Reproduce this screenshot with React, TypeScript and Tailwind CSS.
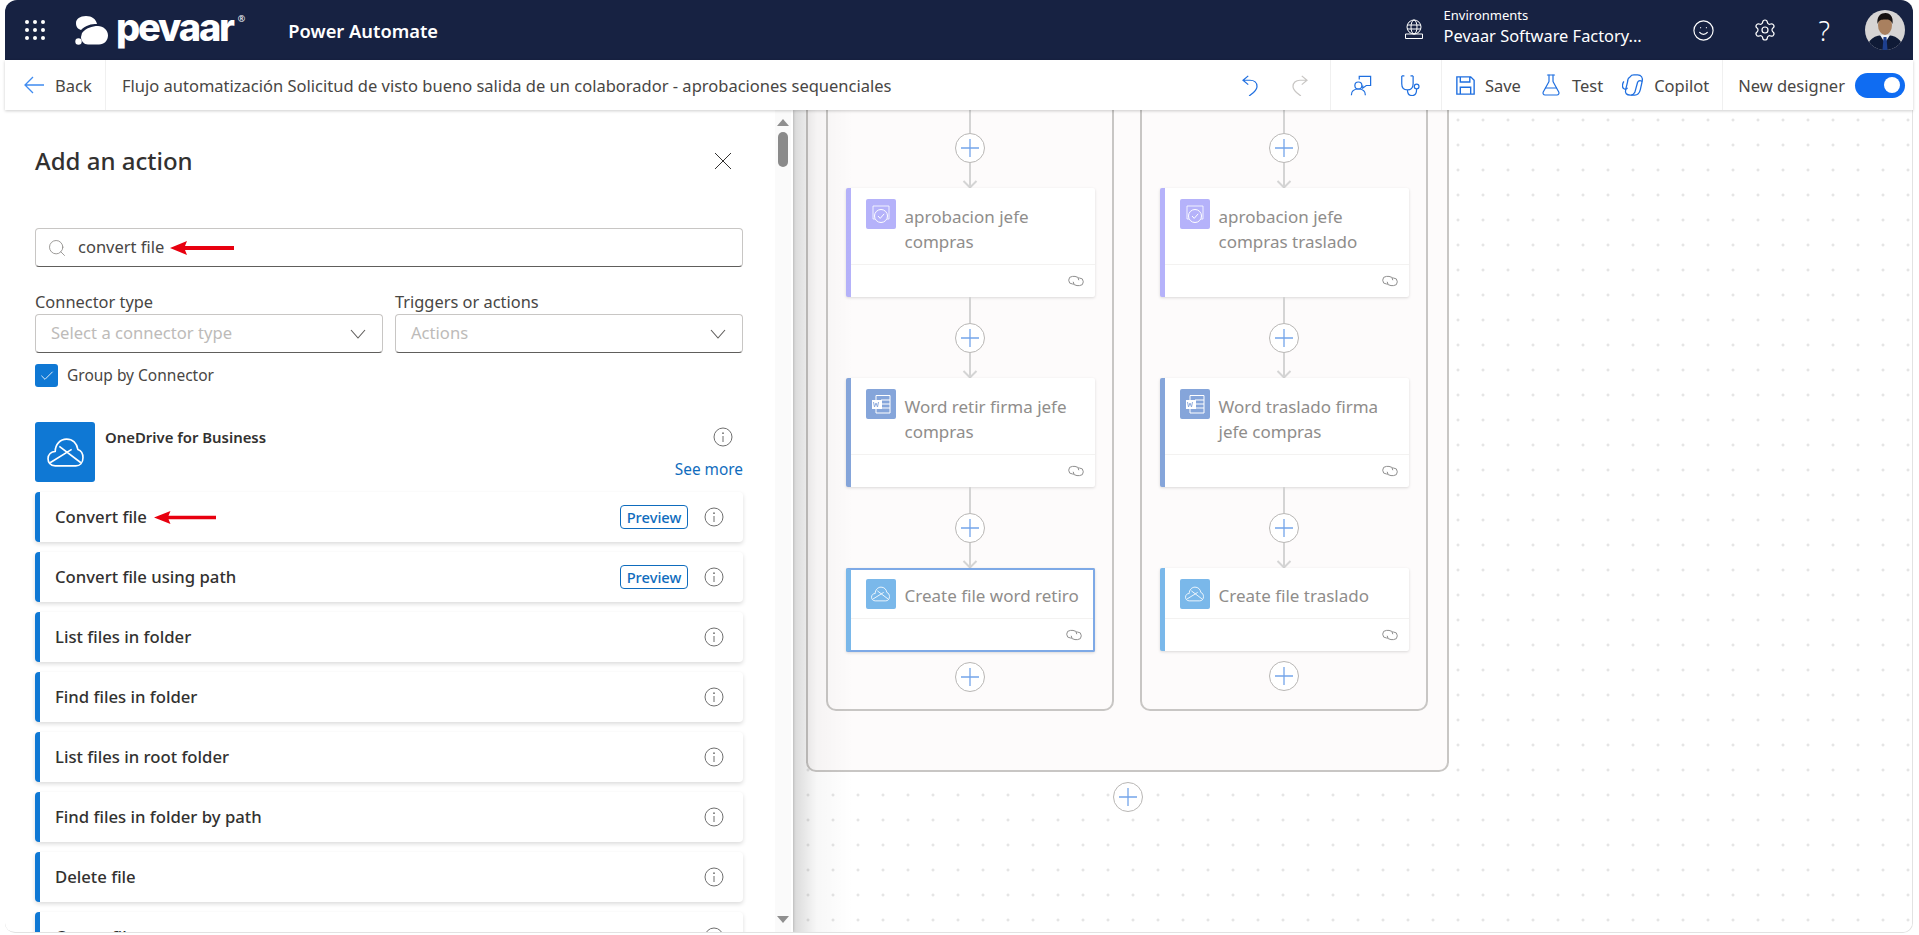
import React from "react";
import { Search, Check, FlaskConical, Smile, Settings } from "lucide-react";

const Info = ({ className = "" }: { className?: string }) => (
  <svg viewBox="0 0 20 20" className={className} fill="none" stroke="#6f6f6f" strokeWidth="1">
    <circle cx="10" cy="10" r="9" />
    <circle cx="10" cy="6.2" r="0.9" fill="#6f6f6f" stroke="none" />
    <path d="M10 9v6" />
  </svg>
);

const Arrow = ({ className = "" }: { className?: string }) => (
  <svg viewBox="0 0 64 14" preserveAspectRatio="none" className={className}>
    <path d="M0 7 L17 0 L15 5 L64 5 L64 9 L15 9 L17 14 Z" fill="#e8000f" />
  </svg>
);

const CloudIcon = ({ className = "" }: { className?: string }) => (
  <svg viewBox="0 0 36 30" className={className} fill="none" stroke="#fff" strokeWidth="1.6" strokeLinejoin="round">
    <path d="M8 28 C3 28 1 24 1 21 C1 17 4 14 8 14 C8 7 13 2 19 2 C25 2 29 6 30 12 C33 13 35 16 35 20 C35 25 32 28 28 28 Z" />
    <path d="M3 25 L24 12 M12 9 L33 25" />
  </svg>
);

const ApprovalIcon = () => (
  <svg viewBox="0 0 30 30" className="w-[30px] h-[30px]" fill="none" stroke="#fff" strokeWidth="1">
    <path d="M9 20 H7 V7 H23 V20 H21" opacity="0.8" />
    <circle cx="15" cy="17" r="6.5" />
    <path d="M12 17 l2.2 2.4 l4-4.6" />
  </svg>
);

const WordIcon = () => (
  <svg viewBox="0 0 30 30" className="w-[30px] h-[30px]" fill="none">
    <path d="M10 6.5 H24 V24 H10 Z" stroke="#fff" strokeWidth="1" />
    <path d="M15 11 H24 M15 15 H24 M15 19 H24" stroke="#fff" strokeWidth="1" />
    <rect x="6" y="11" width="10" height="9" fill="#fff" />
    <path d="M7.5 13 l1 5 l1.5-4 l1.5 4 l1-5" stroke="#84a4d9" strokeWidth="0.9" />
  </svg>
);

const LinkIcon = () => (
  <svg viewBox="0 0 16 14" className="w-[16px] h-[14px]" fill="none" stroke="#8f8f8f" strokeWidth="1">
    <path d="M6 10 H4.5 a3.8 3.8 0 0 1 0-7.6 H7 a3.8 3.8 0 0 1 3.8 3.8" />
    <path d="M10 4 H11.5 a3.8 3.8 0 0 1 0 7.6 H9 a3.8 3.8 0 0 1-3.8-3.8" />
  </svg>
);

const Chevron = () => (
  <svg viewBox="0 0 16 10" className="w-[16px] h-[10px]" fill="none" stroke="#605e5c" strokeWidth="1.1">
    <path d="M1 1 L8 9 L15 1" />
  </svg>
);

const Plus = () => (
  <div className="w-[30px] h-[30px] shrink-0 rounded-full border border-[#b9b7b5] bg-white flex items-center justify-center">
    <svg viewBox="0 0 18 18" className="w-[18px] h-[18px]" stroke="#74a5ea" strokeWidth="1.3">
      <path d="M9 0 V18 M0 9 H18" />
    </svg>
  </div>
);

const Connector = () => (
  <svg viewBox="0 0 16 25" className="w-[16px] h-[25px] shrink-0" fill="none" stroke="#d4d4d4" strokeWidth="2">
    <path d="M8 0 V24 M1.5 18 L8 24.5 L14.5 18" />
  </svg>
);

type CardProps = { lines: string[]; kind: "approval" | "word" | "drive"; selected?: boolean };

const Card = ({ lines, kind, selected }: CardProps) => {
  const bar = kind === "approval" ? "border-l-[#b5b2fa]" : kind === "word" ? "border-l-[#85a5da]" : "border-l-[#7ab8ea]";
  const bg = kind === "approval" ? "bg-[#b5b2fa]" : kind === "word" ? "bg-[#85a5da]" : "bg-[#7ab8ea]";
  const two = lines.length > 1;
  return (
    <div
      className={`w-[249px] shrink-0 bg-white rounded-[2px] border-l-[5px] flex flex-col shadow-[0_1px_3px_rgba(0,0,0,0.14)] ${bar} ${
        selected ? "border-y-2 border-r-2 border-y-[#7ea9e6] border-r-[#7ea9e6]" : ""
      }`}
    >
      <div className={`flex pl-[15px] ${two ? "h-[76px] pt-[11px]" : selected ? "h-[48px] pt-[9px]" : "h-[50px] pt-[11px]"}`}>
        <div className={`w-[30px] h-[30px] rounded-[2px] shrink-0 flex items-center justify-center ${bg}`}>
          {kind === "approval" && <ApprovalIcon />}
          {kind === "word" && <WordIcon />}
          {kind === "drive" && <CloudIcon className="w-[19px] h-[16px]" />}
        </div>
        <div className={`ml-[9px] text-[17px] leading-[25px] text-[#8f8d8b] whitespace-nowrap ${two ? "pt-[5px]" : "pt-[4px]"}`}>
          {lines.map((l) => (
            <div key={l}>{l}</div>
          ))}
        </div>
      </div>
      <div className={`border-t border-[#f3f2f1] flex items-center justify-end pr-[11px] ${selected ? "h-[32px]" : "h-[33px]"}`}>
        <LinkIcon />
      </div>
    </div>
  );
};

const Column = ({ a, b, c, selected }: { a: string[]; b: string[]; c: string[]; selected?: boolean }) => (
  <div className="w-[288px] border-2 border-[#c8c6c4] rounded-b-[10px] bg-[#fdfbfb] flex flex-col items-center pb-[17px]">
    <div className="w-[2px] h-[39px] bg-[#d4d4d4]" />
    <Plus />
    <Connector />
    <Card lines={a} kind="approval" />
    <div className="w-[2px] h-[26px] bg-[#d4d4d4]" />
    <Plus />
    <Connector />
    <Card lines={b} kind="word" />
    <div className="w-[2px] h-[26px] bg-[#d4d4d4]" />
    <Plus />
    <Connector />
    <Card lines={c} kind="drive" selected={selected} />
    <div className="mt-[10px]">
      <Plus />
    </div>
  </div>
);

const Row = ({ label, preview, arrow }: { label: string; preview?: boolean; arrow?: boolean }) => (
  <div className="h-[50px] shrink-0 rounded-[4px] bg-white border-l-[5px] border-l-[#0f78d4] shadow-[0_2px_4px_rgba(0,0,0,0.14)] flex items-center pl-[15px] pr-[19px]">
    <span className="text-[16.7px] font-medium text-[#323130]">{label}</span>
    {arrow && <Arrow className="w-[62px] h-[13px] ml-[7px]" />}
    <div className="flex-1" />
    {preview && (
      <span className="h-[24px] w-[68px] mr-[16px] rounded-[4px] border border-[#0f6cbd] text-[#0f6cbd] text-[14.7px] font-medium flex items-center justify-center">
        Preview
      </span>
    )}
    <Info className="w-[20px] h-[20px]" />
  </div>
);

const TOOL_TEXT = "mt-[3px] text-[16.5px] text-[#484644] whitespace-nowrap";

export default function App() {
  return (
    <div className="w-[1919px] h-[935px] bg-white overflow-hidden pl-[5px] pr-[6px] pb-[2px] flex flex-col font-['Noto_Sans',sans-serif] text-[#323130]">
      {/* Top bar */}
      <header className="h-[60px] shrink-0 bg-[#172242] rounded-tl-[12px] rounded-tr-[12px] flex items-center text-white">
        <svg viewBox="0 0 20 20" className="w-[20px] h-[20px] ml-[20px]" fill="#fff">
          {[2, 10, 18].map((y) => [2, 10, 18].map((x) => <circle key={`${x}${y}`} cx={x} cy={y} r="2" />))}
        </svg>
        <svg viewBox="0 0 33 29" className="w-[33px] h-[29px] ml-[30px]" fill="#fff">
          <path d="M1 7 C1 3 5 0 11 0 C17 0 21 3 22 8 C16 8 11 9 6 14 C3 13 1 11 1 7 Z" />
          <path d="M7 17 C11 12 17 10 23 10 C28 10 33 14 33 19.5 C33 24.5 29 28.5 24 28.5 H13 C9 28.5 6 25 6 21 Z" />
          <circle cx="3.5" cy="25.5" r="3.2" />
        </svg>
        <span className="ml-[8px] font-['Inter',sans-serif] font-extrabold text-[38px] leading-none tracking-[-2.2px] pb-[6px]">pevaar</span>
        <span className="self-start mt-[12px] ml-[5px] text-[9px]">®</span>
        <span className="ml-[43px] mt-[2px] text-[18.3px] font-semibold">Power Automate</span>
        <div className="flex-1" />
        <svg viewBox="0 0 24 24" className="w-[24px] h-[24px]" fill="none" stroke="#fff" strokeWidth="1">
          <circle cx="12" cy="9" r="7" />
          <ellipse cx="12" cy="9" rx="3" ry="7" />
          <path d="M5 7 H19 M5 11 H19 M3.5 20.5 H20.5 V16 H3.5 Z" />
        </svg>
        <div className="ml-[18px] w-[230px] flex flex-col pb-[6px]">
          <span className="text-[13px] leading-[17px]">Environments</span>
          <span className="text-[16.4px] leading-[24px]">Pevaar Software Factory...</span>
        </div>
        <Smile size={23} strokeWidth={1.2} className="ml-[18px]" />
        <Settings size={24} strokeWidth={1.2} className="ml-[38px]" />
        <span className="ml-[42px] text-[27px] font-light leading-none">?</span>
        <svg viewBox="0 0 40 40" className="w-[40px] h-[40px] ml-[35px] mr-[8px] rounded-full bg-[#d6d4d4]">
          <path d="M2 40 C2 29 10 25 20 25 C30 25 38 29 38 40 Z" fill="#0f1a36" />
          <path d="M15 25 L20 33 L25 25 Z" fill="#eef0f4" />
          <path d="M18.5 27 H21.5 L22.5 40 H17.5 Z" fill="#1d3f8f" />
          <ellipse cx="20" cy="15" rx="7" ry="10" fill="#a9805f" />
          <path d="M12.5 14 C11.5 6 16 3 20.5 3 C25.5 3 28.5 7 27.5 14 C26 10 24 9.5 20 9.5 C16 9.5 14 10 12.5 14 Z" fill="#151010" />
        </svg>
      </header>

      {/* Toolbar */}
      <div className="h-[50px] shrink-0 bg-white flex items-center shadow-[0_1px_3px_rgba(0,0,0,0.2)] relative z-20">
        <div className="w-[101px] h-full border-r border-[#f0f0f0] flex items-center pl-[19px]">
          <svg viewBox="0 0 20 18" className="w-[20px] h-[18px]" fill="none" stroke="#3f8bf0" strokeWidth="1.3">
            <path d="M20 9 H1 M9 1 L1 9 L9 17" />
          </svg>
          <span className={`ml-[11px] ${TOOL_TEXT}`}>Back</span>
        </div>
        <span className={`ml-[16px] ${TOOL_TEXT}`}>
          Flujo automatización Solicitud de visto bueno salida de un colaborador - aprobaciones sequenciales
        </span>
        <div className="flex-1" />
        <div className="h-full flex items-center border-r border-[#f0f0f0] pr-[5px]">
          <div className="w-[50px] flex justify-center">
            <svg viewBox="0 0 18 24" className="w-[16px] h-[21px]" fill="none" stroke="#1f6fe0" strokeWidth="1.4">
              <path d="M7 1 L1 6 L7 11 M1 6 H9 C14 6 17 9 17 13 C17 16 15 18 13 20 L8 24" />
            </svg>
          </div>
          <div className="w-[50px] flex justify-center">
            <svg viewBox="0 0 18 24" className="w-[16px] h-[21px]" fill="none" stroke="#c8c6c4" strokeWidth="1.4">
              <path d="M11 1 L17 6 L11 11 M17 6 H9 C4 6 1 9 1 13 C1 16 3 18 5 20 L10 24" />
            </svg>
          </div>
        </div>
        <div className="h-full flex items-center border-r border-[#f0f0f0] pl-[5px] pr-[6px]">
          <div className="w-[50px] flex justify-center">
            <svg viewBox="0 0 24 24" className="w-[22px] h-[21px]" fill="none" stroke="#1f6fe0" strokeWidth="1.4">
              <circle cx="9" cy="12" r="4" />
              <path d="M1 23 C1 18 4 16 9 16 C14 16 17 18 17 23 M10 5 L10 1.5 H23 V12 H18 L14 15 V12" />
            </svg>
          </div>
          <div className="w-[49px] flex justify-center">
            <svg viewBox="0 0 24 24" className="w-[21px] h-[21px]" fill="none" stroke="#1f6fe0" strokeWidth="1.4">
              <path d="M2 1 V10 C2 15 5 17 8.5 17 C12 17 15 15 15 10 V1 M2 1 H5 M12 1 H15 M8.5 17 C8.5 22 11 23.5 14 23.5 C17 23.5 19 21 19 16" />
              <circle cx="19" cy="13" r="2.7" />
            </svg>
          </div>
        </div>
        <svg viewBox="0 0 22 22" className="w-[19px] h-[19px] ml-[14px]" fill="none" stroke="#1f6fe0" strokeWidth="1.6">
          <path d="M1 1 H17 L21 5 V21 H1 Z M5 1 V7 H16 V1 M5 21 V13 H17 V21" />
        </svg>
        <span className={`ml-[10px] ${TOOL_TEXT}`}>Save</span>
        <FlaskConical size={24} strokeWidth={1.2} className="ml-[18px] text-[#1f6fe0]" />
        <span className={`ml-[9px] ${TOOL_TEXT}`}>Test</span>
        <svg viewBox="0 0 24 24" className="w-[22px] h-[22px] ml-[19px]" fill="none" stroke="#1f6fe0" strokeWidth="1.4">
          <path d="M9 3 C10 1 12 1 13 1 H17 C21 1 23 4 22 8 L20 17 C19 21 17 23 14 23 H9 C5 23 3 21 4 17 L6 9 C6 6 7 4 9 3 Z" />
          <path d="M2 8 C0 11 0 15 2 16 C3 17 5 17 6 15 M22 8 C20 7 18 7 17 9 L14 20 C13 22 12 23 10 23" />
        </svg>
        <span className={`ml-[10px] ${TOOL_TEXT}`}>Copilot</span>
        <div className="h-full w-[14px] border-r border-[#f0f0f0]" />
        <span className={`ml-[15px] ${TOOL_TEXT}`}>New designer</span>
        <div className="ml-[10px] mr-[8px] w-[50px] h-[25px] shrink-0 rounded-full bg-[#0f6cf2] flex items-center justify-end pr-[5px]">
          <div className="w-[16px] h-[16px] rounded-full bg-white" />
        </div>
      </div>

      {/* Main */}
      <div className="flex-1 min-h-0 flex border-b border-r border-[#e2e2e2] rounded-b-[10px] overflow-hidden">
        <aside className="w-[788px] shrink-0 bg-white flex shadow-[0_0_3px_rgba(0,0,0,0.25)] relative z-10 overflow-hidden">
          <div className="w-[772px] shrink-0 pl-[30px] pr-[34px] flex flex-col overflow-hidden">
            <div className="mt-[32px] h-[38px] shrink-0 flex items-center justify-between pr-[11px]">
              <h1 className="text-[24px] font-medium text-[#323130]">Add an action</h1>
              <svg viewBox="0 0 18 18" className="w-[18px] h-[18px]" fill="none" stroke="#323130" strokeWidth="1">
                <path d="M1 1 L17 17 M17 1 L1 17" />
              </svg>
            </div>
            <div className="mt-[48px] h-[39px] shrink-0 rounded-[4px] border border-[#c8c6c4] border-b-[#605e5c] flex items-center pl-[11px]">
              <Search size={20} strokeWidth={1} className="text-[#8a8886]" />
              <span className="ml-[11px] text-[16.5px] text-[#484644]">convert file</span>
              <Arrow className="w-[64px] h-[14px] ml-[6px]" />
            </div>
            <div className="mt-[23px] grid grid-cols-2 gap-x-[12px] shrink-0">
              {[
                ["Connector type", "Select a connector type"],
                ["Triggers or actions", "Actions"],
              ].map(([label, value]) => (
                <div key={label} className="flex flex-col">
                  <span className="h-[24px] text-[16.4px] leading-[24px] text-[#484644]">{label}</span>
                  <div className="h-[39px] rounded-[4px] border border-[#c8c6c4] border-b-[#605e5c] flex items-center pl-[15px] pr-[16px] justify-between">
                    <span className="text-[16.6px] text-[#bdbbb9]">{value}</span>
                    <Chevron />
                  </div>
                </div>
              ))}
            </div>
            <div className="mt-[11px] flex items-center h-[23px] shrink-0">
              <div className="w-[23px] h-[23px] rounded-[3px] bg-[#0f78d4] flex items-center justify-center">
                <Check size={16} strokeWidth={1.3} className="text-white" />
              </div>
              <span className="ml-[9px] text-[15.5px] text-[#484644]">Group by Connector</span>
            </div>
            <div className="mt-[35px] h-[60px] shrink-0 flex">
              <div className="w-[60px] h-[60px] rounded-[3px] bg-[#0f78d4] flex items-center justify-center">
                <CloudIcon className="w-[37px] h-[31px]" />
              </div>
              <span className="ml-[10px] text-[14.9px] font-semibold text-[#323130] mt-[5px] leading-[20px]">OneDrive for Business</span>
              <div className="flex-1 flex flex-col items-end">
                <Info className="w-[20px] h-[20px] mr-[10px] mt-[5px]" />
                <span className="mt-[13px] text-[15.4px] leading-[20px] text-[#0f6cbd]">See more</span>
              </div>
            </div>
            <div className="mt-[10px] flex flex-col gap-[10px] shrink-0">
              <Row label="Convert file" preview arrow />
              <Row label="Convert file using path" preview />
              <Row label="List files in folder" />
              <Row label="Find files in folder" />
              <Row label="List files in root folder" />
              <Row label="Find files in folder by path" />
              <Row label="Delete file" />
              <Row label="Create file" />
            </div>
          </div>
          <div className="w-[16px] shrink-0 bg-[#fafafa] flex flex-col items-center justify-between pt-[9px] pb-[9px] ml-[-2px]">
            <div className="flex flex-col items-center">
              <div className="w-0 h-0 border-x-[6px] border-x-transparent border-b-[7px] border-b-[#8f8f8f]" />
              <div className="mt-[6px] w-[10px] h-[35px] rounded-full bg-[#8a8a8a]" />
            </div>
            <div className="w-0 h-0 border-x-[6px] border-x-transparent border-t-[7px] border-t-[#8f8f8f]" />
          </div>
        </aside>

        {/* Canvas */}
        <main className="flex-1 min-w-0 relative overflow-hidden bg-white bg-[radial-gradient(circle,#dcdcdc_1px,transparent_1.2px)] bg-size-[25px_25px] bg-position-[2.5px_-2.5px]">
          <div className="absolute inset-y-0 left-0 w-[60px] bg-gradient-to-r from-black/15 via-black/[0.03] via-40% to-transparent z-10 pointer-events-none" />
          <div className="ml-[13px] mt-[-20px] w-[643px] flex flex-col items-center">
            <div className="w-full border-2 border-[#c8c6c4] rounded-[10px] bg-[#fdfbfb] pb-[59px] pl-[18px] flex gap-[26px]">
              <Column a={["aprobacion jefe", "compras"]} b={["Word retir firma jefe", "compras"]} c={["Create file word retiro"]} selected />
              <Column a={["aprobacion jefe", "compras traslado"]} b={["Word traslado firma", "jefe compras"]} c={["Create file traslado"]} />
            </div>
            <div className="mt-[10px]">
              <Plus />
            </div>
          </div>
        </main>
      </div>
    </div>
  );
}
